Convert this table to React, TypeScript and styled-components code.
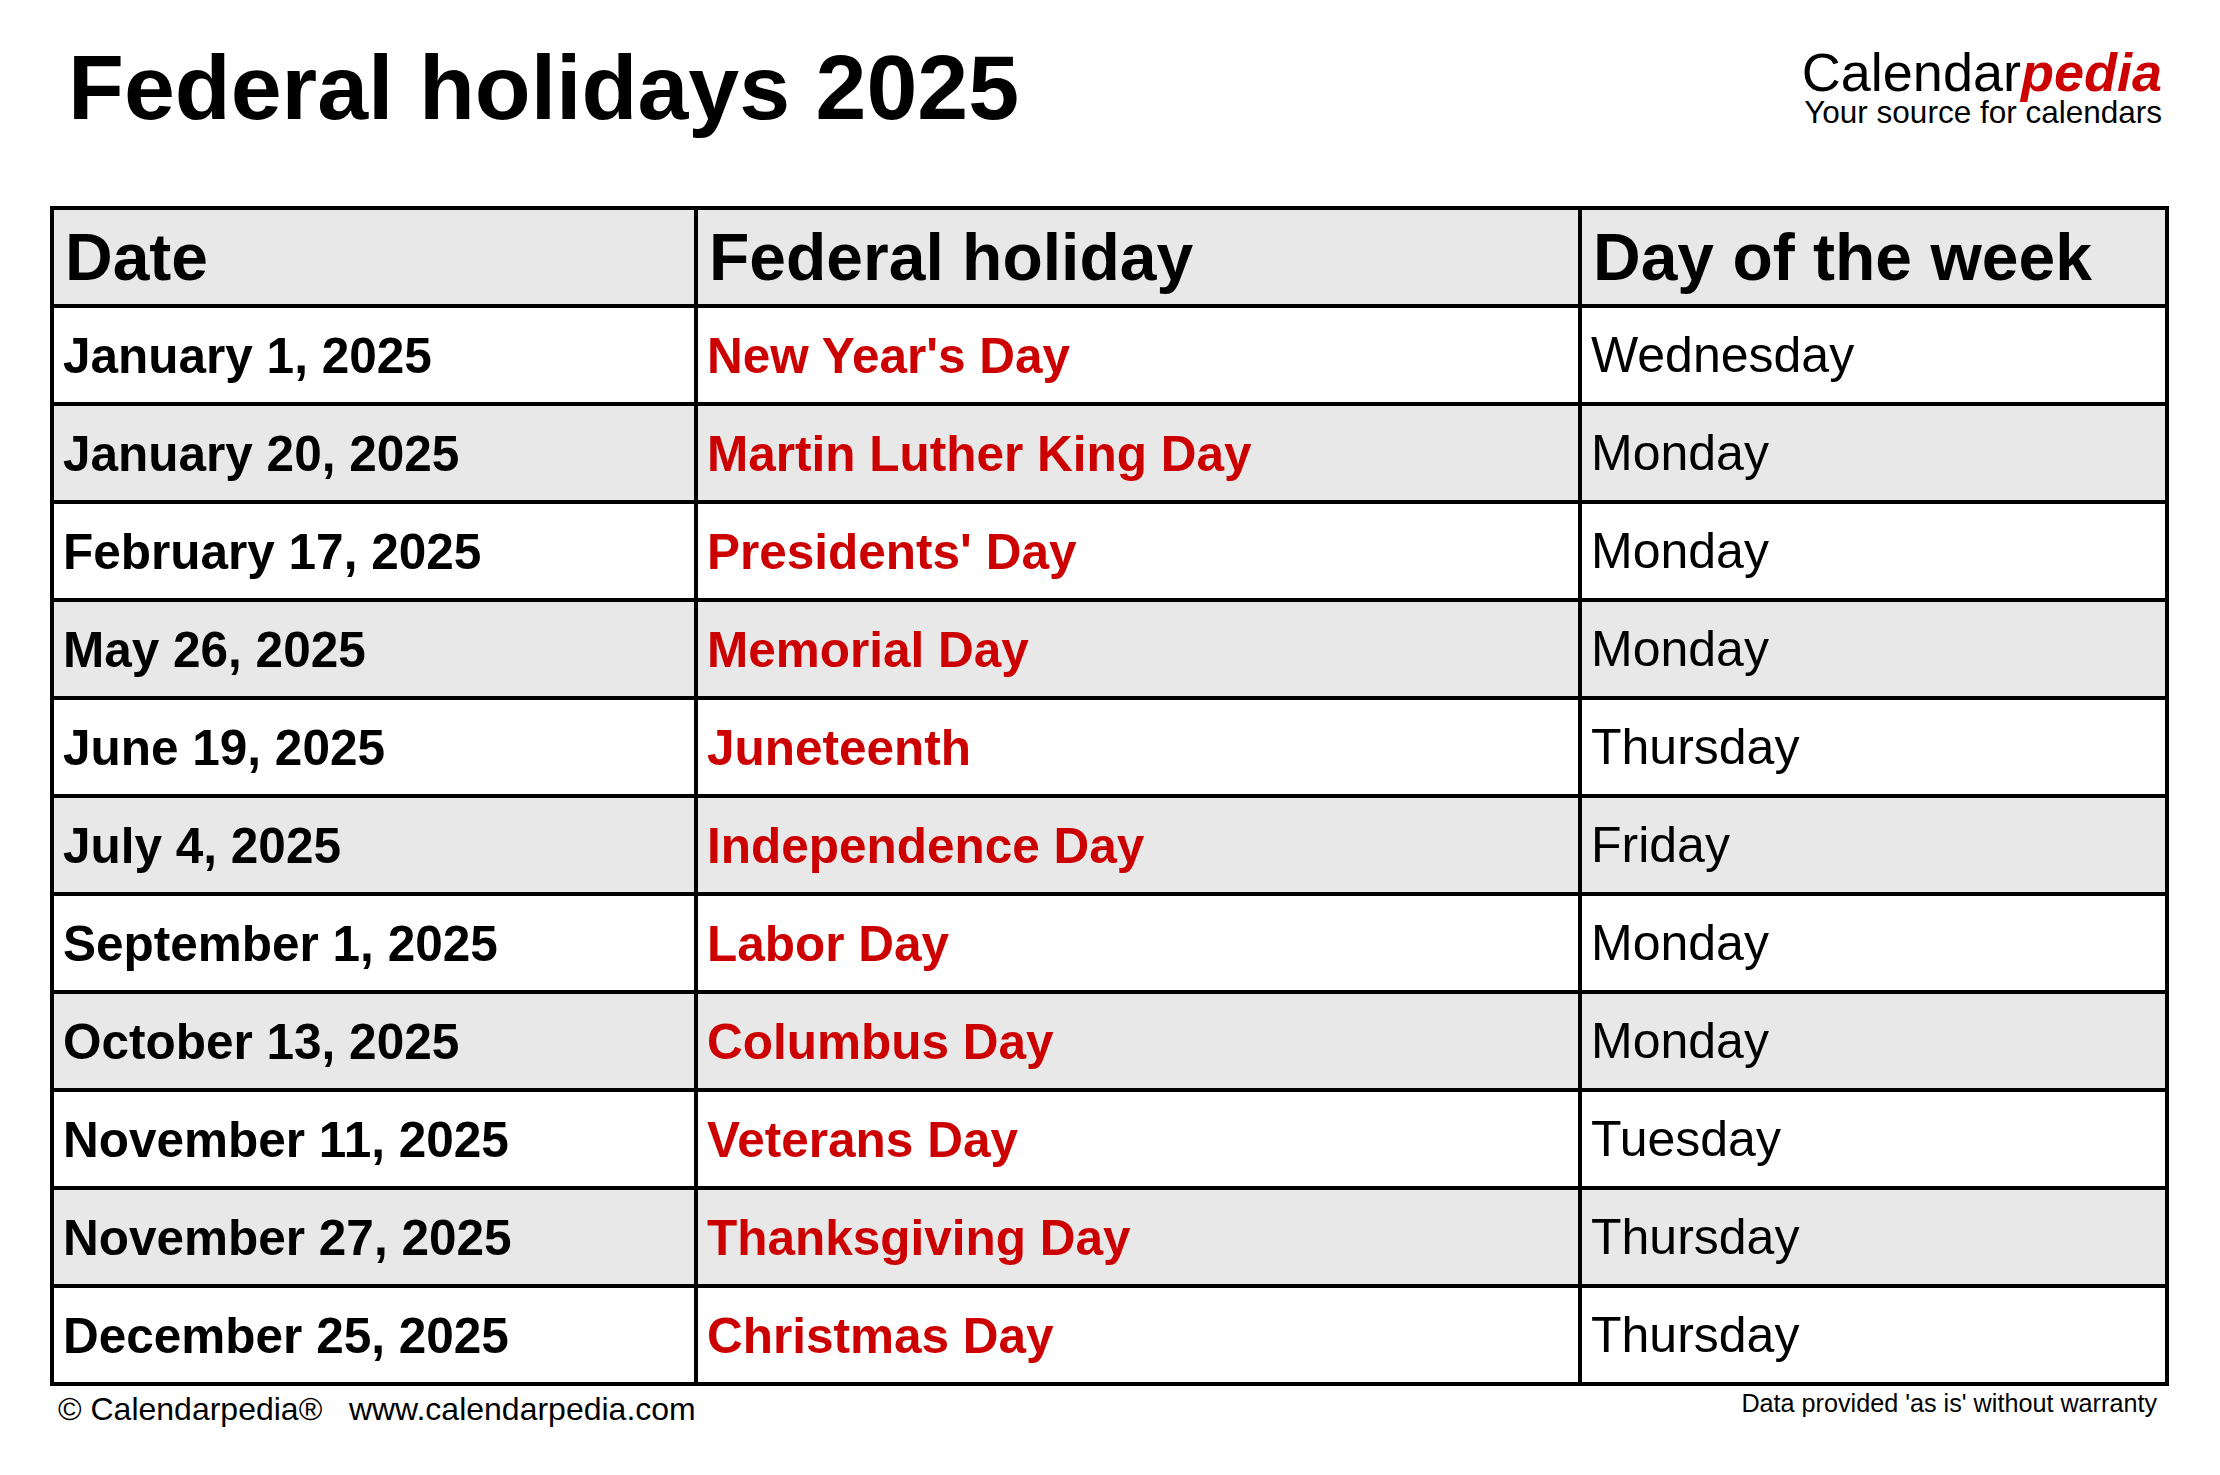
import styled, { createGlobalStyle } from "styled-components";

const GlobalStyle = createGlobalStyle`
    html, body {
        margin: 0;
        padding: 0;
        background: #ffffff;
    }
    body {
        font-family: "Liberation Sans", Arial, sans-serif;
        color: #000000;
    }
`;

const Page = styled.div`
    width: 2220px;
    height: 1475px;
    box-sizing: border-box;
    padding: 0 51px 0 50px;
    display: flex;
    flex-direction: column;
`;

const Header = styled.header`
    height: 206px;
    display: flex;
    justify-content: space-between;
    align-items: flex-start;
`;

const Title = styled.h1`
    margin: 0;
    padding: 42px 0 0 18px;
    font-size: 91.5px;
    line-height: 1;
    font-weight: 700;
`;

const Logo = styled.div`
    padding: 48px 7px 0 0;
    display: flex;
    flex-direction: column;
    align-items: flex-end;
`;

const Brand = styled.div`
    font-size: 54px;
    line-height: 0.92;
    font-weight: 400;
    white-space: nowrap;
`;

const BrandAccent = styled.span`
    color: #cc0000;
    font-weight: 700;
    font-style: italic;
`;

const Tagline = styled.div`
    font-size: 31.5px;
    line-height: 0.9;
    white-space: nowrap;
`;

const Table = styled.div`
    display: grid;
    grid-template-columns: 640px 880px 583px;
    grid-auto-rows: 94px;
    gap: 4px;
    border: 4px solid #000000;
    background: #000000;
`;

type Tone = "head" | "date" | "holiday" | "day";

const Cell = styled.div<{ $shade: boolean; $tone: Tone }>`
    display: flex;
    align-items: center;
    padding: 0 ${({ $tone }) => ($tone === "head" ? "11px" : "9px")};
    background: ${({ $shade }) => ($shade ? "#e8e8e8" : "#ffffff")};
    font-size: ${({ $tone }) => ($tone === "head" ? "66px" : $tone === "day" ? "50px" : "49.5px")};
    font-weight: ${({ $tone }) => ($tone === "day" ? 400 : 700)};
    color: ${({ $tone }) => ($tone === "holiday" ? "#cc0000" : "#000000")};
    white-space: nowrap;
`;

const Footer = styled.footer`
    display: flex;
    justify-content: space-between;
    align-items: flex-start;
`;

const Credit = styled.div`
    margin-top: 7px;
    padding-left: 8px;
    font-size: 32px;
    line-height: 1;
    white-space: pre;
`;

const Disclaimer = styled.div`
    margin-top: 5px;
    padding-right: 12px;
    font-size: 25.2px;
    line-height: 1;
    white-space: pre;
`;

const holidays = [
    ["January 1, 2025", "New Year's Day", "Wednesday"],
    ["January 20, 2025", "Martin Luther King Day", "Monday"],
    ["February 17, 2025", "Presidents' Day", "Monday"],
    ["May 26, 2025", "Memorial Day", "Monday"],
    ["June 19, 2025", "Juneteenth", "Thursday"],
    ["July 4, 2025", "Independence Day", "Friday"],
    ["September 1, 2025", "Labor Day", "Monday"],
    ["October 13, 2025", "Columbus Day", "Monday"],
    ["November 11, 2025", "Veterans Day", "Tuesday"],
    ["November 27, 2025", "Thanksgiving Day", "Thursday"],
    ["December 25, 2025", "Christmas Day", "Thursday"],
];

export default function App() {
    return (
        <>
            <GlobalStyle />
            <Page>
                <Header>
                    <Title>Federal holidays 2025</Title>
                    <Logo>
                        <Brand>
                            Calendar<BrandAccent>pedia</BrandAccent>
                        </Brand>
                        <Tagline>Your source for calendars</Tagline>
                    </Logo>
                </Header>

                <Table>
                    <Cell $shade $tone="head">Date</Cell>
                    <Cell $shade $tone="head">Federal holiday</Cell>
                    <Cell $shade $tone="head">Day of the week</Cell>
                    {holidays.map(([date, name, day], i) => {
                        // every second data row is grey
                        const shade = i % 2 === 1;
                        return [
                            <Cell key={date + "-d"} $shade={shade} $tone="date">{date}</Cell>,
                            <Cell key={date + "-h"} $shade={shade} $tone="holiday">{name}</Cell>,
                            <Cell key={date + "-w"} $shade={shade} $tone="day">{day}</Cell>,
                        ];
                    })}
                </Table>

                <Footer>
                    <Credit>{"© Calendarpedia®   www.calendarpedia.com"}</Credit>
                    <Disclaimer>Data provided 'as is' without warranty</Disclaimer>
                </Footer>
            </Page>
        </>
    );
}
